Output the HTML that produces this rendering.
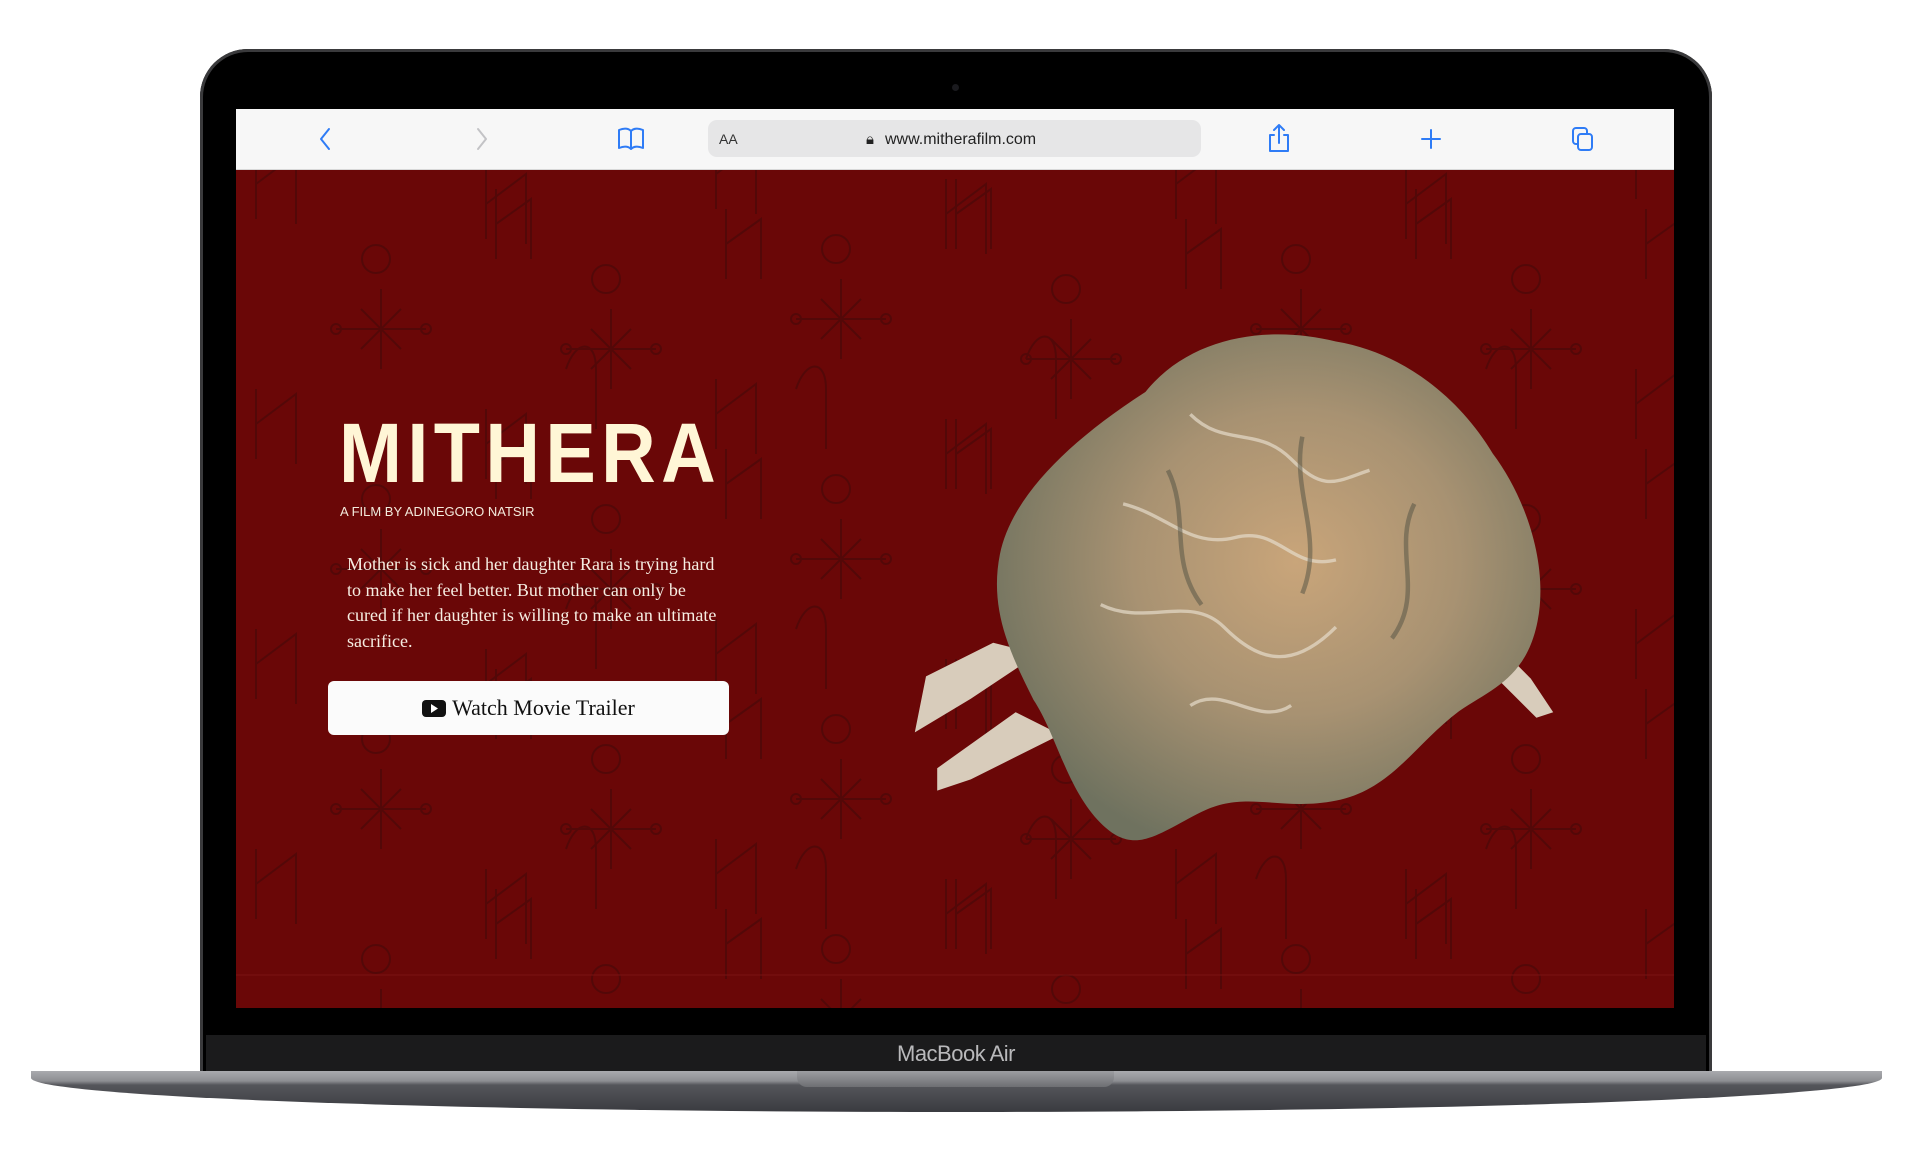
<!DOCTYPE html>
<html><head><meta charset="utf-8"><style>
html,body{margin:0;padding:0;background:#fff;}
body{width:1920px;height:1169px;position:relative;overflow:hidden;font-family:"Liberation Sans",sans-serif;}
.abs{position:absolute;}
#lid{left:200px;top:49px;width:1512px;height:1030px;background:#000;border-radius:48px 48px 0 0;box-shadow:0 0 0 3px #3a3a3c inset;}
#chin{left:206px;top:1035px;width:1500px;height:38px;background:#1b1b1c;color:#b9b9bb;font-size:22px;text-align:center;line-height:38px;letter-spacing:-0.5px;}
#base{left:31px;top:1071px;width:1851px;height:41px;background:linear-gradient(#a9aaae 0,#8d8e92 10px,#55565b 14px,#3b3c41 40px);border-radius:0 0 60% 60%/0 0 100% 100%;}
#notch{left:797px;top:1071px;width:317px;height:16px;background:linear-gradient(#9c9da1,#6e6f73);border-radius:0 0 10px 10px;}
#screen{left:236px;top:109px;width:1438px;height:899px;background:#6a0707;overflow:hidden;}
#bar{left:0;top:0;width:1438px;height:60px;background:#f7f7f7;border-bottom:1px solid #d8d8d8;}
#url{left:472px;top:11px;width:493px;height:37px;background:#e6e6e7;border-radius:9px;}
#title{left:103px;top:302px;color:#fff6d6;font-size:84px;font-weight:bold;letter-spacing:6px;line-height:84px;font-family:"Liberation Sans",sans-serif;transform-origin:0 0;transform:scaleX(0.9);}
#sub{left:104px;top:395px;color:#f3eadc;font-size:13px;}
#para{left:111px;top:443px;width:372px;color:#f6ede2;font-family:"Liberation Serif",serif;font-size:18px;line-height:25.5px;}
#btn{left:92px;top:572px;width:401px;height:54px;background:#fbfbfb;border-radius:6px;text-align:center;font-family:"Liberation Serif",serif;font-size:22px;line-height:54px;color:#111;}
</style></head><body>
<div id="lid" class="abs"></div>
<div class="abs" style="left:952px;top:84px;width:7px;height:7px;border-radius:50%;background:#1a1a1e"></div>
<div id="screen" class="abs">
 <svg class="abs" style="left:0;top:0" width="1438" height="899" fill="none" stroke="#3e0a0a" stroke-width="2" opacity="0.5">
  <g id="r"><path d="M20 40v70M20 75l40-30v70M60 45v70"/><circle cx="140" cy="150" r="14"/><path d="M100 220h90M145 180v80M125 200l40 40M165 200l-40 40"/><circle cx="100" cy="220" r="5"/><circle cx="190" cy="220" r="5"/><path d="M260 80v70M260 115l35-25v60"/><path d="M330 260c10-30 30-30 30 0v60"/></g>
  <use href="#r" x="230" y="20"/><use href="#r" x="460" y="-10"/><use href="#r" x="690" y="30"/><use href="#r" x="920" y="0"/><use href="#r" x="1150" y="20"/><use href="#r" x="1380" y="-20"/>
  <use href="#r" x="0" y="240"/><use href="#r" x="230" y="260"/><use href="#r" x="460" y="230"/><use href="#r" x="690" y="270"/><use href="#r" x="920" y="240"/><use href="#r" x="1150" y="260"/><use href="#r" x="1380" y="220"/>
  <use href="#r" x="0" y="480"/><use href="#r" x="230" y="500"/><use href="#r" x="460" y="470"/><use href="#r" x="690" y="510"/><use href="#r" x="920" y="480"/><use href="#r" x="1150" y="500"/><use href="#r" x="1380" y="460"/>
  <use href="#r" x="0" y="700"/><use href="#r" x="230" y="720"/><use href="#r" x="460" y="690"/><use href="#r" x="690" y="730"/><use href="#r" x="920" y="700"/><use href="#r" x="1150" y="720"/>
  <path d="M0 866h1438" stroke="#8a2020" stroke-width="1" opacity="1"/>
 </svg>
 <div id="bar" class="abs">
  <svg class="abs" style="left:0;top:0" width="1438" height="60" fill="none" stroke-linecap="round" stroke-linejoin="round">
   <path d="M93 20l-8 10 8 10" stroke="#2f7cf6" stroke-width="2"/>
   <path d="M242 20l8 10-8 10" stroke="#c3c3c6" stroke-width="2"/>
   <path d="M383 21c5-2 9-2 12 1v18c-3-3-7-3-12-1zM395 22c3-3 7-3 12-1v18c-5-2-9-2-12 1" stroke="#2f7cf6" stroke-width="2"/>
   <path d="M823 22a9 9 0 1 0 6 5M823 18v5h5" stroke="#222" stroke-width="1.8"/>
   <path d="M1038 26h-4v16h18v-16h-4M1043 34v-18M1038 21l5-5 5 5" stroke="#2f7cf6" stroke-width="2"/>
   <path d="M1195 21v18M1186 30h18" stroke="#2f7cf6" stroke-width="2"/>
   <rect x="1337" y="19" width="14" height="16" rx="3" stroke="#2f7cf6" stroke-width="2"/>
   <rect x="1342" y="25" width="14" height="16" rx="3" stroke="#2f7cf6" stroke-width="2" fill="#f7f7f7"/>
  </svg>
  <div id="url" class="abs">
   <span class="abs" style="left:11px;top:11px;font-size:14px;color:#333">AA</span>
   <span class="abs" style="left:158px;top:11px;font-size:15px;color:#222">&#128274;&#xFE0E;</span>
   <span class="abs" style="left:177px;top:11px;font-size:16px;color:#222">www.mitherafilm.com</span>
  </div>
 </div>
 <div id="title" class="abs">MITHERA</div>
 <div id="sub" class="abs">A FILM BY ADINEGORO NATSIR</div>
 <div id="para" class="abs">Mother is sick and her daughter Rara is trying hard to make her feel better. But mother can only be cured if her daughter is willing to make an ultimate sacrifice.</div>
 <div id="btn" class="abs"><svg width="24" height="17" style="vertical-align:-2px;margin-right:6px"><rect width="24" height="17" rx="4" fill="#111"/><path d="M9 4l7 4.5-7 4.5z" fill="#fff"/></svg>Watch Movie Trailer</div>
 <svg class="abs" style="left:0;top:0" width="1438" height="899">
  <defs><radialGradient id="g" cx="0.55" cy="0.45" r="0.6"><stop offset="0" stop-color="#c9a57a"/><stop offset="0.5" stop-color="#a89272"/><stop offset="1" stop-color="#6f725f"/></radialGradient></defs>
  <g transform="translate(-94 -24) scale(1.12)">
  <path d="M700 528l60-30 40 10-60 40-50 30zM710 610l70-50 40 20-80 40-30 10z" fill="#d8ccbb"/>
  <path d="M1180 470l60 60 20 30-15 5-60-60z" fill="#d8ccbb"/>
  <g transform="translate(36 -6)">
  <path d="M860 280c40-50 110-60 170-45 60 10 110 50 140 100 30 40 50 100 40 150-10 50-40 60-70 80-40 30-60 70-110 80-50 10-80-10-120 10-40 20-60 40-90 10-30-30-40-80-60-110-20-40-40-80-30-130 10-50 60-100 130-145z" fill="url(#g)"/>
  <path d="M900 300c30 30 60 10 90 40s40 20 70 10M840 380c40 10 60 40 100 30s50 30 90 20M820 470c40 20 80-10 110 20s60 40 100 0M900 560c30-20 60 20 90 0" stroke="#e6dccb" stroke-width="3" fill="none" opacity="0.7"/>
  <path d="M880 350c20 40 0 80 30 120M1000 320c-10 50 20 90 0 140M1100 380c-20 40 10 80-20 120" stroke="#4f4f42" stroke-width="4" fill="none" opacity="0.5"/>
  </g>
  </g>
 </svg>
</div>
<div id="chin" class="abs">MacBook Air</div>
<div id="base" class="abs"></div>
<div id="notch" class="abs"></div>
</body></html>
